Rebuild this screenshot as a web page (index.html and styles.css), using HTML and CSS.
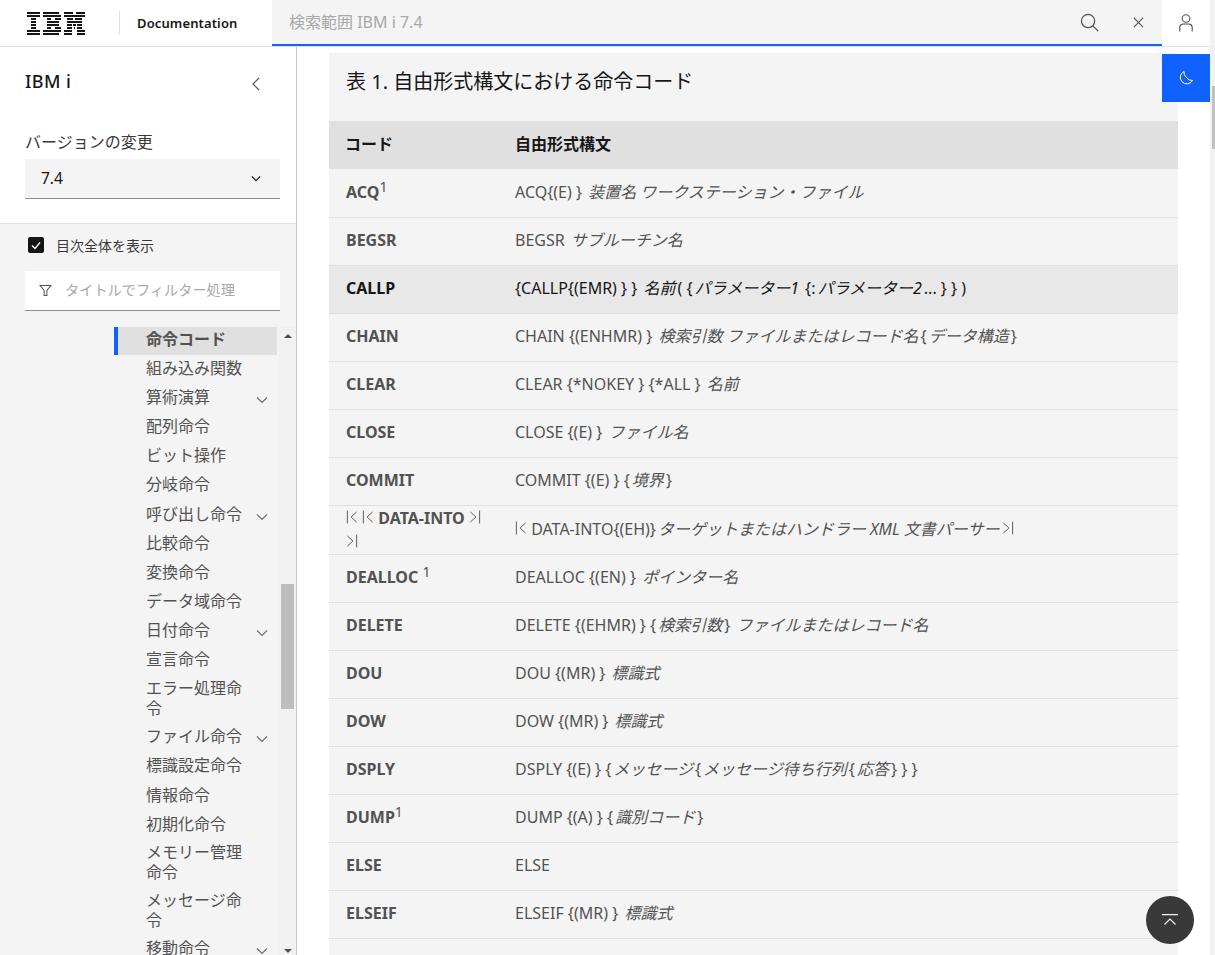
FILE: index.html
```html
<!DOCTYPE html>
<html lang="ja">
<head>
<meta charset="utf-8">
<title>IBM i 7.4</title>
<link rel="stylesheet" href="styles.css">
</head>
<body>
<svg class="defs" width="0" height="0" aria-hidden="true">
  <symbol id="rev-start" viewBox="0 0 13 16"><path d="M1.5 1v14M11.5 2.5 5.5 8l6 5.5" fill="none" stroke="currentColor" stroke-width="1"/></symbol>
  <symbol id="rev-end" viewBox="0 0 13 16"><path d="M11.5 1v14M1.5 2.5 7.500 8l-6 5.500" fill="none" stroke="currentColor" stroke-width="1"/></symbol>
  <symbol id="chev" viewBox="0 0 12 8"><path d="M1 1.500 6 6.500l5-5" fill="none" stroke="currentColor" stroke-width="1.200"/></symbol>
</svg>
<div class="app">
  <div class="frame">
    <header class="topbar">
      <div class="brand">
        <svg class="logo" viewBox="0 0 58 23" aria-label="IBM" role="img">
          <g fill="#161616">
            <path d="M0 0h13v2H0zM16 0h16v2H16zM37 0h9v2h-9zM49 0h9v2h-9z"/>
            <path d="M0 3h13v2H0zM16 3h18v2H16zM37 3h11v2H37zM47 3h11v2H47z"/>
            <path d="M4 6h5v2H4zM20 6h4v2h-4zM28 6h6v2h-6zM40 6h6v2h-6zM48 6h7v2h-7z"/>
            <path d="M4 9h5v2H4zM20 9h12v2H20zM40 9h15v2H40z"/>
            <path d="M4 12h5v2H4zM20 12h12v2H20zM40 12h5v2h-5zM46 12h3v2h-3zM50 12h5v2h-5z"/>
            <path d="M4 15h5v2H4zM20 15h4v2h-4zM28 15h6v2h-6zM40 15h5v2h-5zM47 15h1v2h-1zM50 15h5v2h-5z"/>
            <path d="M0 18h13v2H0zM16 18h18v2H16zM37 18h8v2h-8zM50 18h8v2h-8z"/>
            <path d="M0 21h13v2H0zM16 21h16v2H16zM37 21h8v2h-8zM50 21h8v2h-8z"/>
          </g>
        </svg>
        <span class="brand-sep"></span>
        <span class="brand-name">Documentation</span>
      </div>
      <div class="search">
        <span class="search-text">検索範囲 IBM i 7.4</span>
        <svg class="search-icon" viewBox="0 0 20 20"><circle cx="8.500" cy="8.500" r="7" fill="none" stroke="currentColor" stroke-width="1.300"/><path d="m13.500 13.500 5.500 5.500" stroke="currentColor" stroke-width="1.300"/></svg>
        <svg class="close-icon" viewBox="0 0 12 12"><path d="m1 1 10 10M11 1 1 11" stroke="currentColor" stroke-width="1.200"/></svg>
      </div>
      <div class="user">
        <svg viewBox="0 0 14 18" class="user-icon"><circle cx="7" cy="4.500" r="3.800" fill="none" stroke="currentColor" stroke-width="1.100"/><path d="M.8 17.500V13a3.500 3.500 0 0 1 3.500-3h5.400a3.500 3.500 0 0 1 3.500 3v4.500" fill="none" stroke="currentColor" stroke-width="1.100"/></svg>
      </div>
    </header>
    <div class="body">
      <aside class="sidebar">
        <div class="side-top">
          <div class="side-title-row">
            <span class="side-title">IBM i</span>
            <svg class="back" viewBox="0 0 9 14"><path d="M8 1 2 7l6 6" fill="none" stroke="currentColor" stroke-width="1.200"/></svg>
          </div>
          <div class="ver-label">バージョンの変更</div>
          <div class="ver-select">
            <span>7.4</span>
            <svg class="chev-s" viewBox="0 0 12 8"><path d="M1 1.500 6 6.500l5-5" fill="none" stroke="currentColor" stroke-width="1.400"/></svg>
          </div>
        </div>
        <div class="side-bottom">
          <label class="toggle">
            <span class="checkbox"><svg viewBox="0 0 16 16"><path d="m4 8.500 3 3 5-6" fill="none" stroke="#fff" stroke-width="1.200"/></svg></span>
            <span>目次全体を表示</span>
          </label>
          <div class="filter">
            <svg class="filter-icon" viewBox="0 0 14 14"><path d="M1 1.500h12L8.500 7v5.500h-3V7z" fill="none" stroke="currentColor" stroke-width="1.100"/></svg>
            <span class="filter-text">タイトルでフィルター処理</span>
          </div>
          <div class="toc">
            <ul class="toc-list">
              <li class="toc-item active"><span>命令コード</span></li>
              <li class="toc-item"><span>組み込み関数</span></li>
              <li class="toc-item"><span>算術演算</span><svg class="chev-t"><use href="#chev"/></svg></li>
              <li class="toc-item"><span>配列命令</span></li>
              <li class="toc-item"><span>ビット操作</span></li>
              <li class="toc-item"><span>分岐命令</span></li>
              <li class="toc-item"><span>呼び出し命令</span><svg class="chev-t"><use href="#chev"/></svg></li>
              <li class="toc-item"><span>比較命令</span></li>
              <li class="toc-item"><span>変換命令</span></li>
              <li class="toc-item"><span>データ域命令</span></li>
              <li class="toc-item"><span>日付命令</span><svg class="chev-t"><use href="#chev"/></svg></li>
              <li class="toc-item"><span>宣言命令</span></li>
              <li class="toc-item wrap"><span>エラー処理命令</span></li>
              <li class="toc-item"><span>ファイル命令</span><svg class="chev-t"><use href="#chev"/></svg></li>
              <li class="toc-item"><span>標識設定命令</span></li>
              <li class="toc-item"><span>情報命令</span></li>
              <li class="toc-item"><span>初期化命令</span></li>
              <li class="toc-item wrap"><span>メモリー管理命令</span></li>
              <li class="toc-item wrap"><span>メッセージ命令</span></li>
              <li class="toc-item"><span>移動命令</span><svg class="chev-t"><use href="#chev"/></svg></li>
            </ul>
            <div class="toc-scroll">
              <span class="arrow-up"></span>
              <span class="toc-thumb"></span>
              <span class="arrow-down"></span>
            </div>
          </div>
        </div>
      </aside>
      <main class="main">
        <div class="content">
          <h2 class="caption">表 1. 自由形式構文における命令コード</h2>
          <table class="codes">
            <thead><tr><th>コード</th><th>自由形式構文</th></tr></thead>
            <tbody>
              <tr><th>ACQ<sup>1</sup></th><td>ACQ{(E) } <i>装置名 ワークステーション・ファイル</i></td></tr>
              <tr><th>BEGSR</th><td>BEGSR <i>サブルーチン名</i></td></tr>
              <tr class="hl"><th>CALLP</th><td>{CALLP{(EMR) } } <i>名前</i>( {<i>パラメーター1</i> {:<i>パラメーター2</i>... } } )</td></tr>
              <tr><th>CHAIN</th><td>CHAIN {(ENHMR) } <i>検索引数 ファイルまたはレコード名</i>{<i>データ構造</i>}</td></tr>
              <tr><th>CLEAR</th><td>CLEAR {*NOKEY } {*ALL } <i>名前</i></td></tr>
              <tr><th>CLOSE</th><td>CLOSE {(E) } <i>ファイル名</i></td></tr>
              <tr><th>COMMIT</th><td>COMMIT {(E) } {<i>境界</i>}</td></tr>
              <tr class="rev"><th><svg class="rev-i"><use href="#rev-start"/></svg> <svg class="rev-i"><use href="#rev-start"/></svg> DATA-INTO <svg class="rev-i"><use href="#rev-end"/></svg> <svg class="rev-i"><use href="#rev-end"/></svg></th><td><svg class="rev-i"><use href="#rev-start"/></svg> DATA-INTO{(EH)}<i>ターゲットまたはハンドラー XML 文書パーサー</i><svg class="rev-i"><use href="#rev-end"/></svg></td></tr>
              <tr><th>DEALLOC <sup>1</sup></th><td>DEALLOC {(EN) } <i>ポインター名</i></td></tr>
              <tr><th>DELETE</th><td>DELETE {(EHMR) } {<i>検索引数</i>} <i>ファイルまたはレコード名</i></td></tr>
              <tr><th>DOU</th><td>DOU {(MR) } <i>標識式</i></td></tr>
              <tr><th>DOW</th><td>DOW {(MR) } <i>標識式</i></td></tr>
              <tr><th>DSPLY</th><td>DSPLY {(E) } {<i>メッセージ</i>{<i>メッセージ待ち行列</i>{<i>応答</i>} } }</td></tr>
              <tr><th>DUMP<sup>1</sup></th><td>DUMP {(A) } {<i>識別コード</i>}</td></tr>
              <tr><th>ELSE</th><td>ELSE</td></tr>
              <tr><th>ELSEIF</th><td>ELSEIF {(MR) } <i>標識式</i></td></tr>
              <tr class="blank"><th></th><td></td></tr>
            </tbody>
          </table>
        </div>
        <button class="theme" aria-label="theme">
          <svg viewBox="0 0 16 16"><path d="M6 1.500a6.500 6.500 0 1 0 8.500 9 6.500 6.500 0 0 1-6-3A6.500 6.500 0 0 1 6 1.500z" fill="none" stroke="#fff" stroke-width="1"/></svg>
        </button>
        <button class="to-top" aria-label="top">
          <svg viewBox="0 0 16 12"><path d="M0 .7h16M2.500 10.500 8 5l5.500 5.500" fill="none" stroke="#f4f4f4" stroke-width="1.200"/></svg>
        </button>
      </main>
    </div>
  </div>
  <div class="page-scroll"><span class="page-thumb"></span></div>
</div>
</body>
</html>
```
FILE: styles.css
```css
* { box-sizing: border-box; }
html, body { margin: 0; height: 100%; overflow: hidden; background: #fff; }
body {
  font-family: "Noto Sans", "Noto Sans CJK JP", sans-serif;
  font-size: 16px;
  color: #525252;
}
.defs { position: absolute; }
.app { display: flex; height: 955px; width: 1215px; }
.frame { display: flex; flex-direction: column; flex: 1; min-width: 0; }

/* top bar */
.topbar {
  display: flex;
  height: 47px;
  flex: none;
  border-bottom: 1px solid #e0e0e0;
  background: #fff;
}
.brand { width: 272px; flex: none; display: flex; align-items: center; padding-left: 27px; }
.logo { width: 58px; height: 23px; display: block; }
.brand-sep { width: 1px; height: 24px; background: #e0e0e0; margin-left: 34px; }
.brand-name { margin-left: 17px; font-size: 13px; font-weight: 600; color: #161616; letter-spacing: .12px; }
.search {
  flex: 1;
  display: flex;
  align-items: center;
  height: 46px;
  background: #f4f4f4;
  border-bottom: 2px solid #0f62fe;
  padding-left: 17px;
  color: #a8a8a8;
}
.search-text { flex: 1; font-size: 16px; padding-bottom: 3px; }
.search-icon { width: 19px; height: 19px; color: #525252; margin-right: 34px; }
.close-icon { width: 11px; height: 11px; color: #525252; margin-right: 18px; }
.user { width: 48px; flex: none; display: flex; align-items: center; justify-content: center; }
.user-icon { width: 14px; height: 18px; color: #525252; }

/* layout */
.body { flex: 1; display: flex; min-height: 0; }
.sidebar {
  width: 297px;
  flex: none;
  display: flex;
  flex-direction: column;
  border-right: 1px solid #c6c6c6;
  overflow: hidden;
}
.side-top { height: 177px; flex: none; padding: 24px 16px 0 25px; border-bottom: 1px solid #e0e0e0; background: #fff; }
.side-title-row { display: flex; justify-content: space-between; align-items: flex-start; }
.side-title { font-size: 18px; line-height: 20px; font-weight: 500; color: #161616; letter-spacing: .4px; }
.side-title-row .back { width: 9px; height: 14px; color: #525252; margin: 6px 20px 0 0; }
.ver-label { margin-top: 39px; font-size: 16px; line-height: 24px; color: #393939; }
.ver-select {
  margin-top: 5px;
  height: 40px;
  background: #f4f4f4;
  border-bottom: 1px solid #8d8d8d;
  display: flex;
  align-items: center;
  justify-content: space-between;
  padding: 0 19px 1px 16px;
  color: #161616;
  font-size: 15.500px;
}
.chev-s { width: 10px; height: 7px; color: #161616; margin-top: 1px; }
.side-bottom { flex: 1; min-height: 0; background: #f4f4f4; display: flex; flex-direction: column; }
.toggle { display: flex; align-items: center; gap: 12px; margin: 11px 0 0 28px; height: 20px; font-size: 14px; color: #393939; }
.checkbox { width: 16px; height: 16px; background: #161616; border-radius: 2px; display: block; }
.checkbox svg { display: block; }
.filter {
  margin: 16px 16px 0 25px;
  height: 40px;
  background: #fff;
  border-bottom: 1px solid #8d8d8d;
  display: flex;
  align-items: center;
  padding-left: 14px;
  gap: 13px;
  font-size: 14.200px;
  color: #a8a8a8;
}
.filter-text { padding-bottom: 4px; }
.filter-icon { width: 13px; height: 13px; color: #525252; }
.toc { position: relative; flex: 1; min-height: 0; margin-top: 16px; overflow: hidden; }
.toc-list { list-style: none; margin: 0; padding: 0 19px 0 114px; }
.toc-item {
  display: flex;
  justify-content: space-between;
  padding: 4.600px 9px 4.600px 32px;
  line-height: 20px;
  color: #525252;
}
.toc-item > span { width: 100px; flex: none; }
.toc-item.wrap { padding-top: 3.800px; padding-bottom: 3.800px; }
.toc-item.active { background: #e0e0e0; border-left: 4px solid #0f62fe; padding: 0 0 0 28px; height: 28px; line-height: 24px; margin-bottom: -2px; font-weight: 700; }
.chev-t { width: 12px; height: 8px; color: #6f6f6f; margin-top: 9px; }
.toc-scroll { position: absolute; top: 0; right: 0; bottom: 0; width: 17px; background: #f1f1f1; }
.toc-thumb { position: absolute; left: 2px; top: 257px; width: 13px; height: 125px; background: #bdbdbd; }
.arrow-up, .arrow-down { position: absolute; left: 5px; width: 0; height: 0; border-left: 4px solid transparent; border-right: 4px solid transparent; }
.arrow-up { top: 7px; border-bottom: 4px solid #505050; }
.arrow-down { bottom: 2px; border-top: 4px solid #505050; }

/* main */
.main { position: relative; flex: 1; min-width: 0; padding: 6px 32px 0; overflow: hidden; background: #fff; }
.content { background: #f4f4f4; height: 100%; }
.caption { margin: 0; height: 68px; padding: 15px 17px 0; font-size: 20px; line-height: 28px; font-weight: 400; color: #161616; }
.codes { border-collapse: collapse; width: 100%; table-layout: fixed; font-size: 16px; }
.codes thead tr { background: #e0e0e0; height: 48px; }
.codes thead th { color: #161616; font-size: 16px; font-weight: 600; }
.codes th, .codes td { text-align: left; padding: 0 16px 2px; line-height: 22px; }
.codes th:first-child { width: 170px; padding-left: 17px; }
.codes thead th:first-child { padding-left: 16px; }
.codes tbody tr { height: 48px; border-bottom: 1px solid #e0e0e0; }
.codes tbody th { font-weight: 700; color: #525252; }
.codes td { font-weight: 400; }
.codes i { padding: 0 2px; }
.codes sup { font-size: 14px; font-weight: 400; line-height: 0; }
.codes tr.hl { background: #e8e8e8; }
.codes tr.hl th, .codes tr.hl td { color: #161616; }
.codes tr.rev { height: 49px; }
.codes tr.rev th { line-height: 24px; padding-right: 8px; padding-bottom: 0; }
.rev-i { width: 12px; height: 16px; vertical-align: -1px; }
.theme {
  position: absolute; top: 7px; right: 0;
  width: 48px; height: 48px;
  background: #0f62fe; border: 0; padding: 0;
  display: flex; align-items: center; justify-content: center;
}
.theme svg { width: 16px; height: 16px; }
.to-top {
  position: absolute; right: 16px; bottom: 11px;
  width: 48px; height: 48px; border-radius: 50%;
  background: #393939; border: 0; padding: 0;
  display: flex; align-items: center; justify-content: center;
}
.to-top svg { width: 16px; height: 12px; }
.page-scroll { width: 5px; flex: none; background: #f1f1f1; padding: 86px 0 0 2px; }
.page-thumb { display: block; width: 3px; height: 63px; background: #c1c1c1; }
```
